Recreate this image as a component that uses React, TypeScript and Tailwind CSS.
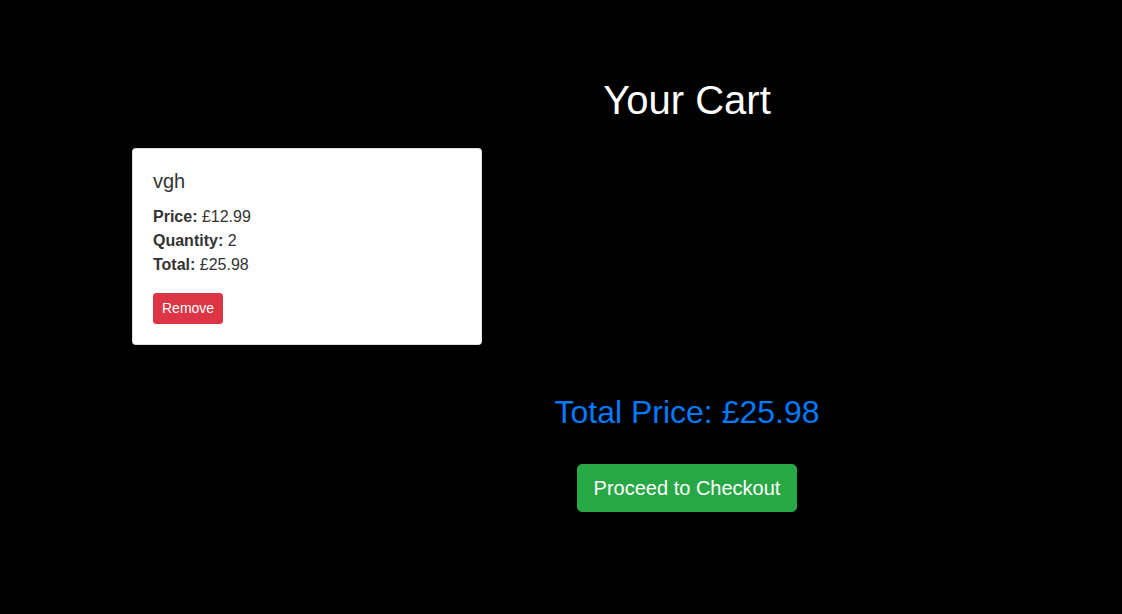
import React from "react";

export default function App() {
  return (
    <div
      className="w-full min-h-screen h-[614px] bg-black flex"
      style={{ fontFamily: '"Liberation Sans", Arial, sans-serif' }}
    >
      <div className="pl-[132px] pt-[148px]">
        <div className="w-[350px] bg-white rounded-[4px] border border-[rgba(0,0,0,0.125)] p-5 text-[#333333]">
          <h5 className="text-[20px] leading-[24px] mb-3">vgh</h5>
          <div className="text-[16px] leading-[24px] mb-4">
            <div>
              <span className="font-bold">Price:</span> £12.99
            </div>
            <div>
              <span className="font-bold">Quantity:</span> 2
            </div>
            <div>
              <span className="font-bold">Total:</span> £25.98
            </div>
          </div>
          <button className="bg-[#dc3545] text-white text-[14px] leading-[21px] px-2 py-1 rounded-[3px] border border-[#dc3545]">
            Remove
          </button>
        </div>
      </div>
      <div className="w-[410px] pt-[76px] flex flex-col items-center">
        <h1 className="text-white text-[40px] leading-[48px]">Your Cart</h1>
        <h2 className="text-[#007bff] text-[32px] leading-[38px] mt-[269px]">
          Total Price: £25.98
        </h2>
        <button className="mt-[33px] bg-[#28a745] text-white text-[20px] leading-[30px] px-4 py-2 rounded-[5px] border border-[#28a745]">
          Proceed to Checkout
        </button>
      </div>
    </div>
  );
}
